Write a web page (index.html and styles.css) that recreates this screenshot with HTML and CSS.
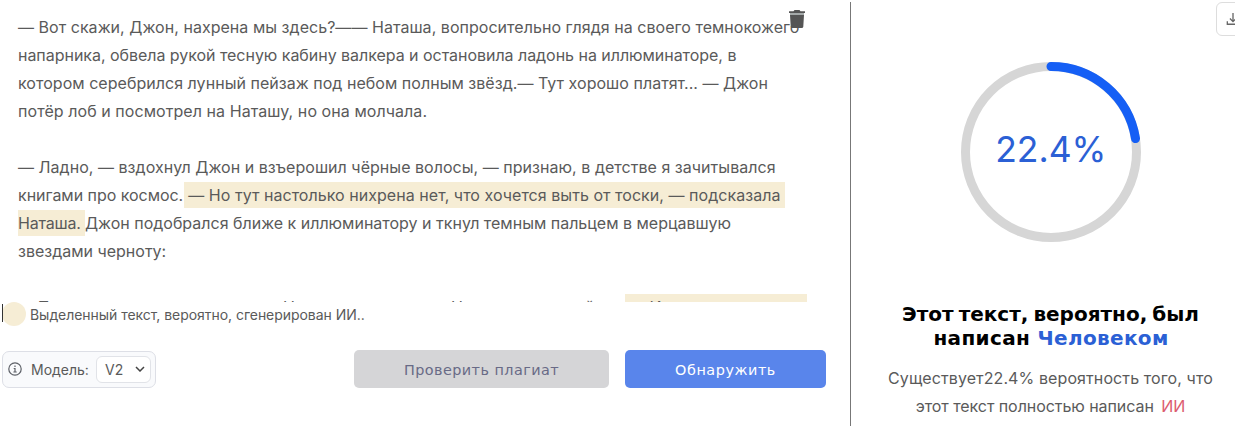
FILE: index.html
```html
<!DOCTYPE html>
<html lang="ru">
<head>
<meta charset="utf-8">
<title>Детектор ИИ</title>
<link rel="stylesheet" href="styles.css">
</head>
<body>
<main class="app">
  <section class="editor">
    <div class="text">
      <p><span class="wide">— Вот скажи, Джон, нахрена мы здесь?—— Наташа, вопросительно глядя на своего темнокожего</span><br><span class="tight">напарника, обвела рукой тесную кабину валкера и остановила ладонь на иллюминаторе, в</span><br><span class="wide">котором серебрился лунный пейзаж под небом полным звёзд.— Тут хорошо платят... — Джон</span><br><span class="wider">потёр лоб и посмотрел на Наташу, но она молчала.</span></p>
      <p><span class="wide">— Ладно, — вздохнул Джон и взъерошил чёрные волосы, — признаю, в детстве я зачитывался</span><br><span class="tight">книгами про космос.</span><mark class="ml"> — Но тут настолько нихрена нет, что хочется выть от тоски, — подсказала&nbsp;</mark><br><mark class="name">Наташа.&nbsp;</mark>Джон подобрался ближе к иллюминатору и ткнул темным пальцем в мерцавшую<br>звездами черноту:</p>
      <p class="next"><span class="s1">— Тут не поспоришь, ну что.</span><span class="s2">Но мы не знаем.</span><span class="s3">Но может,</span><span class="s4">й</span><mark class="s5">— И что же теперь</mark></p>
    </div>
    <svg class="trash" viewBox="0 0 16 18"><path d="M0 1.2h4.5L5.5 0h5l1 1.2H16V3H0z" fill="#555"/><path d="M1 3h14v2H1z" fill="#a5aaaa"/><path d="M1 5h14l-.7 11.4Q14.200 18 12.700 18H3.300Q1.800 18 1.700 16.400z" fill="#555"/></svg>
    <div class="legend"><i class="caret"></i><i class="dot"></i><span>Выделенный текст, вероятно, сгенерирован ИИ..</span></div>
    <div class="actions">
      <div class="model">
        <svg class="info" viewBox="0 0 14 14" fill="none" stroke="#5d6067" stroke-width="1.200"><circle cx="7" cy="7" r="6.200"/><path d="M7 3.500v1.400M5.700 6.500H7v3.400M5.400 10h3.300"/></svg>
        <span class="label">Модель:</span>
        <div class="select">V2<svg viewBox="0 0 10 6" fill="none" stroke="#444" stroke-width="1.500"><path d="M1 1l4 4 4-4"/></svg></div>
      </div>
      <button class="btn plag">Проверить плагиат</button>
      <button class="btn detect">Обнаружить</button>
    </div>
  </section>
  <section class="result">
    <div class="download"><svg viewBox="0 0 16 16" fill="none" stroke="#666" stroke-width="1.500"><path d="M8 1v10M4.500 7.500L8 11l3.500-3.500M1.500 10.500v3.500h13v-3.500"/></svg></div>
    <svg class="ring" viewBox="0 0 180 180" fill="none" stroke-width="9"><circle cx="90" cy="90" r="85.500" stroke="#d6d6d6"/><path d="M90 4.500A85.500 85.500 0 0 1 174.500 76.500" stroke="#155ff5" stroke-linecap="round"/><text x="89.800" y="99.700" text-anchor="middle">22.4%</text></svg>
    <h1><span class="h1a">Этот текст, вероятно, был</span><span class="h1b">написан <b>Человеком</b></span></h1>
    <p class="note"><span class="n1">Существует22.4% вероятность того, что</span><span class="n2">этот текст полностью написан <em>ИИ</em></span></p>
  </section>
</main>
</body>
</html>
```
FILE: styles.css
```css
* { box-sizing: border-box; }
body { margin: 0; background: #fff; font-family: Inter, "Liberation Sans", sans-serif; color: #5a5a5a; overflow: hidden; }
.app { display: flex; width: 1235px; height: 426px; overflow: hidden; }
.editor { position: relative; flex: 0 0 851px; }
.editor::after { content: ""; position: absolute; right: 0; top: 2px; bottom: 0; width: 1px; background: #777; }
.text { height: 302px; padding: 13px 0 0 18px; overflow: hidden; font-size: 16px; line-height: 28px; white-space: nowrap; }
.text p { margin: 0 0 28px; }
.wide { letter-spacing: .035px; }
.wider { letter-spacing: .065px; }
.tight { letter-spacing: -.036px; }
mark { background: #f6edd5; color: inherit; padding: 3px 0; }
.ml { letter-spacing: .04px; margin-left: .5px; }
.name { letter-spacing: -.2px; }
.next { display: flex; }
.s1 { width: 265px; }
.s2 { width: 168px; }
.s3 { width: 134px; }
.s4 { width: 40px; }
.s5 { width: 182px; margin-top: 1px; padding: 0 0 0 4px; line-height: 26px; }
.trash { position: absolute; left: 789px; top: 10px; width: 16px; height: 18px; }
.legend { display: flex; align-items: center; height: 24px; padding-left: 2px; font-size: 14px; letter-spacing: -.045px; }
.caret { position: relative; z-index: 1; width: 1px; height: 18px; margin-top: -3px; background: #333; }
.dot { width: 24px; height: 24px; margin: 0 4px 0 -1px; border-radius: 50%; background: #f6edd5; }
.actions { display: flex; align-items: center; margin: 24px 0 0 2px; height: 38px; }
.model { display: flex; align-items: center; width: 154px; height: 37px; padding: 0 4px 0 5px; border: 1px solid #dddfe6; border-radius: 7px; background: #f9fafc; font-size: 14px; }
.info { width: 14px; height: 14px; }
.label { margin-left: 9px; }
.select { display: flex; align-items: center; justify-content: space-between; width: 55px; height: 27px; margin-left: auto; padding: 0 5px 0 8px; border: 1px solid #e1e3e8; border-radius: 6px; background: #fff; }
.select svg { width: 10px; height: 6px; }
.btn { height: 38px; padding: 2px 0 0; border: 0; border-radius: 5px; font: 14.4px "DejaVu Sans", sans-serif; }
.plag { width: 255px; margin-left: 198px; background: #d5d5d7; color: #686a86; letter-spacing: .45px; }
.detect { width: 201px; margin-left: 16px; background: #5985eb; color: #fff; letter-spacing: .55px; }
.result { position: relative; flex: 0 0 400px; display: flex; flex-direction: column; align-items: center; padding-top: 62px; }
.download { position: absolute; left: 365px; top: 2px; width: 34px; height: 34px; padding: 9px; border: 1px solid #ddd; border-radius: 6px; }
.download svg { display: block; width: 14px; height: 14px; }
.ring { width: 180px; height: 180px; flex: none; }
.ring text { font-size: 35.5px; fill: #2b60d5; stroke: none; }
h1 { display: flex; flex-direction: column; align-items: center; margin: 60px 0 0; font: bold 20px/24px "DejaVu Sans", sans-serif; color: #000; white-space: nowrap; letter-spacing: .35px; }
.h1a { letter-spacing: 0; word-spacing: -2px; margin-right: 1px; }
h1 b { color: #2b60d5; }
.note { display: flex; flex-direction: column; align-items: center; margin: 14px 0 0; font-size: 16px; line-height: 28px; white-space: nowrap; }
.n1 { letter-spacing: .1px; margin-right: 1px; }
.n2 { letter-spacing: -.06px; margin-right: 1px; }
.note em { color: #dc5c70; font-style: normal; margin-left: 3px; }
```
